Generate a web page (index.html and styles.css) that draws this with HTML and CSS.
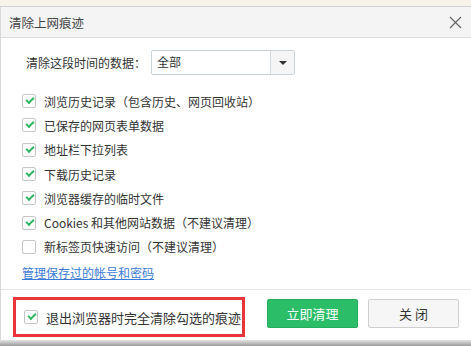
FILE: index.html
```html
<!DOCTYPE html>
<html lang="zh-CN">
<head>
  <meta charset="UTF-8">
  <title>清除上网痕迹</title>
  <link rel="stylesheet" href="styles.css">
</head>
<body>
  <div class="topstrip"></div>
  <div class="dialog">
    <div class="titlebar">
      <span class="title">清除上网痕迹</span>
      <svg class="close" width="13" height="13" viewBox="0 0 13 13">
        <path d="M1 1L12 12M12 1L1 12" stroke="#666" stroke-width="1.2" fill="none"/>
      </svg>
    </div>

    <div class="content">
      <div class="range">
        <span class="range-label">清除这段时间的数据：</span>
        <div class="select">
          <span class="select-value">全部</span>
          <span class="select-btn"><span class="arrow"></span></span>
        </div>
      </div>

      <ul class="options">
        <li><span class="box checked"></span>浏览历史记录（包含历史、网页回收站）</li>
        <li><span class="box checked"></span>已保存的网页表单数据</li>
        <li><span class="box checked"></span>地址栏下拉列表</li>
        <li><span class="box checked"></span>下载历史记录</li>
        <li><span class="box checked"></span>浏览器缓存的临时文件</li>
        <li><span class="box checked"></span>Cookies 和其他网站数据（不建议清理）</li>
        <li><span class="box"></span>新标签页快速访问（不建议清理）</li>
      </ul>

      <a class="manage" href="#">管理保存过的帐号和密码</a>
    </div>

    <div class="footer">
      <div class="exit-option">
        <span class="box checked"></span>退出浏览器时完全清除勾选的痕迹
      </div>
      <button class="btn primary">立即清理</button>
      <button class="btn">关 闭</button>
    </div>
  </div>
  <div class="bottomshade"></div>
</body>
</html>
```

FILE: styles.css
```css
body {
  margin: 0;
  width: 471px;
  height: 346px;
  overflow: hidden;
  background: #fff;
  font-family: "Noto Sans CJK SC", "Noto Sans", sans-serif;
  color: #333;
}

.topstrip {
  height: 6px;
  background: #f6f4ea;
  border-bottom: 1px solid #d4d4d4;
}

.dialog {
  background: #fff;
  border-left: 1px solid #d8d8d8;
  height: 333px;
}

.titlebar {
  height: 30px;
  background: #f4f4f4;
  border-bottom: 1px solid #dcdcdc;
  display: flex;
  align-items: center;
  justify-content: space-between;
  padding: 0 9px 0 8px;
}

.title {
  font-size: 12.5px;
  color: #444;
}

.content {
  padding: 12px 0 0 21px;
}

.range {
  display: flex;
  align-items: center;
  padding-left: 4px;
}

.range-label {
  font-size: 12px;
  width: 125px;
}

.select {
  width: 142px;
  height: 23px;
  border: 1px solid #c9d3dc;
  border-radius: 2px;
  display: flex;
}

.select-value {
  flex: 1;
  font-size: 12px;
  line-height: 21px;
  padding-left: 5px;
}

.select-btn {
  width: 23px;
  border-left: 1px solid #d4dbe2;
  background: #f5f5f5;
  display: flex;
  align-items: center;
  justify-content: center;
}

.arrow {
  width: 0;
  height: 0;
  border-left: 4px solid transparent;
  border-right: 4px solid transparent;
  border-top: 4px solid #333;
}

.options {
  list-style: none;
  margin: 14px 0 0;
  padding: 0;
}

.options li {
  height: 24.3px;
  display: flex;
  align-items: center;
  font-size: 12px;
}

.box {
  width: 12px;
  height: 12px;
  border: 1px solid #c6c6c6;
  border-radius: 2px;
  margin-right: 8px;
  flex-shrink: 0;
  position: relative;
  background: #fff;
}

.box.checked::after {
  content: "";
  position: absolute;
  left: 3px;
  top: 2px;
  width: 6px;
  height: 3px;
  border-left: 2px solid #2cb55f;
  border-bottom: 2px solid #2cb55f;
  transform: rotate(-45deg);
}

.manage {
  display: inline-block;
  margin-top: 3px;
  font-size: 12px;
  line-height: 17px;
  color: #3a7ad6;
  text-decoration: underline;
}

.footer {
  margin-top: 6px;
  border-top: 1px solid #e6e6e6;
  display: flex;
  align-items: flex-start;
  padding: 7px 12px 0 12px;
}

.exit-option {
  width: 232px;
  height: 40px;
  flex-shrink: 0;
  border: 3px solid #e8353b;
  display: flex;
  align-items: center;
  padding-left: 8px;
  box-sizing: border-box;
  font-size: 13px;
  white-space: nowrap;
  margin-right: 22px;
}

.btn {
  width: 91px;
  height: 29px;
  margin-top: 2px;
  flex-shrink: 0;
  border: 1px solid #cfcfcf;
  border-radius: 2px;
  background: #f6f6f6;
  font-family: inherit;
  font-size: 13px;
  color: #333;
  padding: 0;
}

.btn.primary {
  background: #2cbd69;
  border-color: #25ad5e;
  color: #fff;
  margin-right: 10px;
}

.bottomshade {
  height: 6px;
  background: linear-gradient(#e4e4e4, #9a9a9a);
}
```
